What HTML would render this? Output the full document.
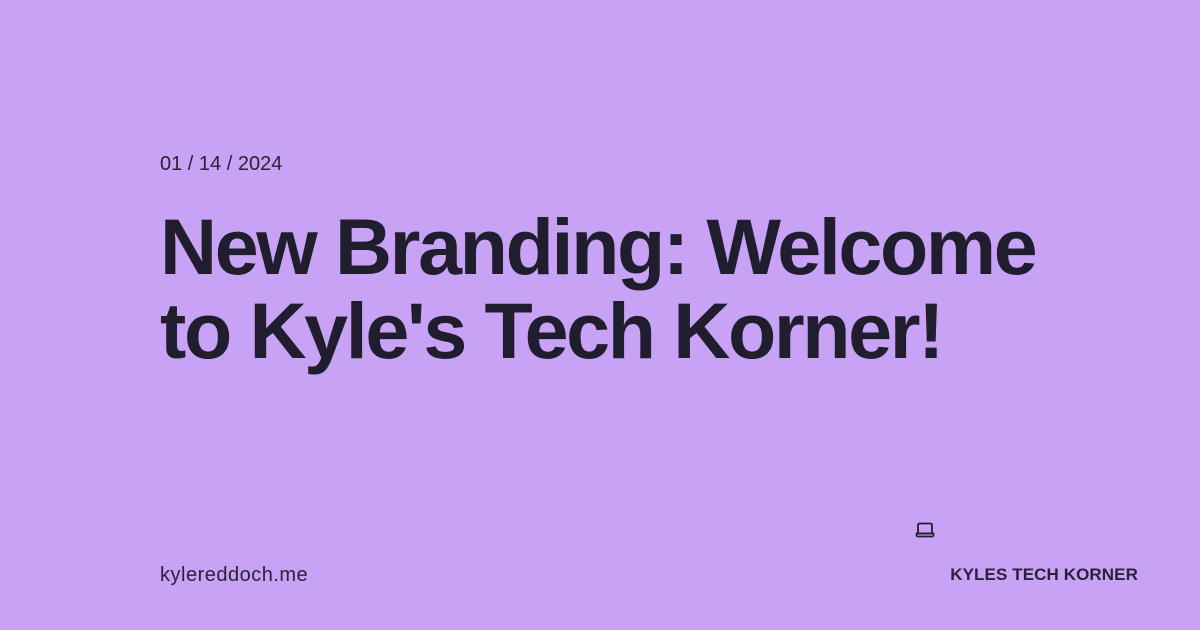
<!DOCTYPE html>
<html><head><style>
body{margin:0;width:1200px;height:630px;background:#c8a2f4;font-family:"Liberation Sans",sans-serif;color:#201e2e;position:relative;overflow:hidden}
.d{position:absolute;left:160px;top:153px;font-size:20px;letter-spacing:0px;color:#2a2238}
.t{position:absolute;left:160px;top:205px;font-size:79px;font-weight:bold;line-height:84px;letter-spacing:-2.35px;width:1000px}
.u{position:absolute;left:160px;top:564px;font-size:20px;letter-spacing:0.5px;color:#2a2238}
.k{position:absolute;right:62px;top:565px;font-size:17px;font-weight:bold;letter-spacing:0.1px;color:#2a2238}
svg{position:absolute;left:915px;top:521px}
</style></head><body>
<div class="d">01 / 14 / 2024</div>
<div class="t">New Branding: Welcome<br>to Kyle's Tech Korner!</div>
<div class="u">kylereddoch.me</div>
<div class="k">KYLES TECH KORNER</div>
<svg width="20" height="18" viewBox="0 0 20 18" fill="none" stroke="#201e2e" stroke-width="1.8" stroke-linejoin="round"><rect x="3" y="2.5" width="14" height="10" rx="1.5"/><path d="M1.5 12.5h17v1.5a1.5 1.5 0 0 1-1.5 1.5H3a1.5 1.5 0 0 1-1.5-1.5z"/></svg>
</body></html>
